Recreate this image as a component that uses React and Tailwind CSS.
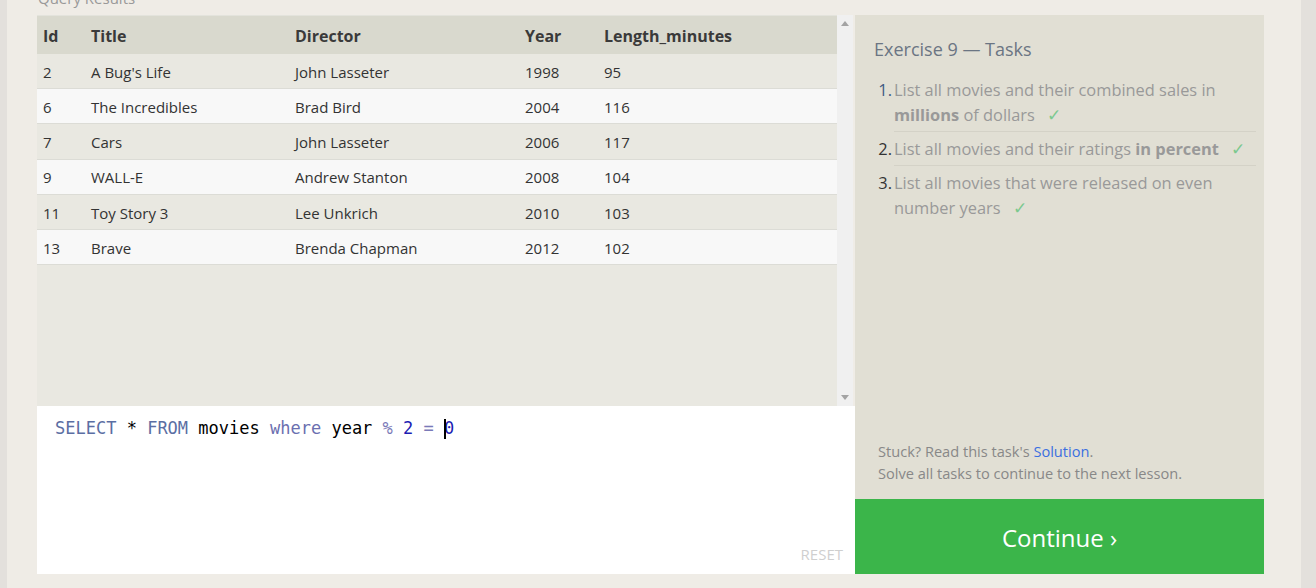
import React from "react";

const rows = [
  ["2", "A Bug's Life", "John Lasseter", "1998", "95"],
  ["6", "The Incredibles", "Brad Bird", "2004", "116"],
  ["7", "Cars", "John Lasseter", "2006", "117"],
  ["9", "WALL-E", "Andrew Stanton", "2008", "104"],
  ["11", "Toy Story 3", "Lee Unkrich", "2010", "103"],
  ["13", "Brave", "Brenda Chapman", "2012", "102"],
];

const tasks = [
  <>List all movies and their combined sales in <b className="font-bold">millions</b> of dollars</>,
  <>List all movies and their ratings <b className="font-bold">in percent</b></>,
  <>List all movies that were released on even number years</>,
];

function Check() {
  return <span className="ml-3 text-[17px] text-[#7cc98f]">✓</span>;
}

export default function App() {
  return (
    <div
      className="h-[588px] w-[1316px] overflow-hidden bg-[#e3e0dc] flex"
      style={{ fontFamily: '"Open Sans", "Noto Sans", sans-serif' }}
    >
      <div className="ml-[7px] w-[1294px] h-full bg-[#efece6] flex flex-col">
        {/* cut-off heading */}
        <div className="h-[15px] relative overflow-hidden">
          <div className="absolute left-[31px] -top-[13px] text-[15px] text-[#999]">Query Results</div>
        </div>

        <div className="flex pl-[30px]">
          {/* left column */}
          <div className="w-[818px] flex flex-col">
            <div className="flex h-[391px]">
              <div className="w-[800px] bg-[#e9e8e1] text-[15px] text-[#333]">
                <div className="flex h-[39px] items-center pt-[2px] bg-[#d9d9ce] font-bold text-[16px] text-[#3a3a3a] border-t border-[#e3e3dc]">
                  <div className="w-[54px] pl-[6px]">Id</div>
                  <div className="w-[204px]">Title</div>
                  <div className="w-[230px]">Director</div>
                  <div className="w-[79px]">Year</div>
                  <div>Length_minutes</div>
                </div>
                {rows.map((r, i) => (
                  <div
                    key={i}
                    className={`flex h-[35.2px] items-center pt-[2px] border-b border-[#dcdcd6] ${
                      i % 2 === 0 ? "bg-[#e9e8e1]" : "bg-[#f8f8f8]"
                    }`}
                  >
                    <div className="w-[54px] pl-[6px]">{r[0]}</div>
                    <div className="w-[204px]">{r[1]}</div>
                    <div className="w-[230px]">{r[2]}</div>
                    <div className="w-[79px]">{r[3]}</div>
                    <div>{r[4]}</div>
                  </div>
                ))}
              </div>
              {/* scrollbar */}
              <div className="w-[16px] bg-[#f0f0f0] flex flex-col justify-between items-center py-[6px]">
                <svg width="8" height="5" viewBox="0 0 8 5"><path d="M0 5 L4 0 L8 5 Z" fill="#a3a3a3" /></svg>
                <svg width="8" height="5" viewBox="0 0 8 5"><path d="M0 0 L4 5 L8 0 Z" fill="#a3a3a3" /></svg>
              </div>
            </div>

            {/* editor */}
            <div className="h-[168px] bg-white relative">
              <div
                className="pt-[11px] pl-[18px] text-[17px] leading-[22px] whitespace-pre"
                style={{ fontFamily: '"DejaVu Sans Mono", "Liberation Mono", monospace' }}
              >
                <span className="text-[#5b6ea3]">SELECT</span>
                <span className="text-black"> * </span>
                <span className="text-[#5b6ea3]">FROM</span>
                <span className="text-black"> movies </span>
                <span className="text-[#6b6fb0]">where</span>
                <span className="text-black"> year </span>
                <span className="text-[#7a7ab8]">%</span>
                <span> </span>
                <span className="text-[#1d1db3]">2</span>
                <span> </span>
                <span className="text-[#7a7ab8]">=</span>
                <span> </span>
                <span className="relative text-[#1d1db3]">
                  <span className="absolute left-0 top-[1px] h-[20px] w-[2px] bg-black" />0
                </span>
              </div>
              <div className="absolute right-[12px] bottom-[9px] text-[15px] text-[#cfcfcf] uppercase">Reset</div>
            </div>
          </div>

          {/* right column */}
          <div className="w-[409px] flex flex-col">
            <div className="h-[484px] bg-[#e1dfd4] flex flex-col justify-between">
              <div className="pt-[21px] pl-[19px] pr-[8px]">
                <div className="text-[18px] text-[#6b7583]">Exercise 9 — Tasks</div>
                <ol className="mt-[14px] text-[16.4px] leading-[25px] text-[#999]">
                  {tasks.map((t, i) => (
                    <li key={i} className="flex">
                      <span
                        className={`w-[20px] text-right pr-[2px] shrink-0 ${i === 0 ? "" : "pt-[4px]"} ${
                          i === 0 ? "text-[#3e5a82]" : "text-[#333]"
                        }`}
                      >
                        {i + 1}.
                      </span>
                      <div
                        className={`flex-1 ${i < 2 ? "border-b border-[#d4d2c7]" : ""} ${i === 0 ? "pb-[4px]" : "py-[4px]"}`}
                      >
                        {t}
                        <Check />
                      </div>
                    </li>
                  ))}
                </ol>
              </div>
              <div className="pl-[23px] pb-[15px] text-[14.6px] leading-[22px] text-[#888]">
                <div>
                  Stuck? Read this task's <span className="text-[#3b6fe0]">Solution</span>.
                </div>
                <div>Solve all tasks to continue to the next lesson.</div>
              </div>
            </div>
            <div className="h-[75px] bg-[#3bb54a] flex items-center justify-center text-white text-[24px] pt-[2px]">
              Continue ›
            </div>
          </div>
        </div>
      </div>
    </div>
  );
}
